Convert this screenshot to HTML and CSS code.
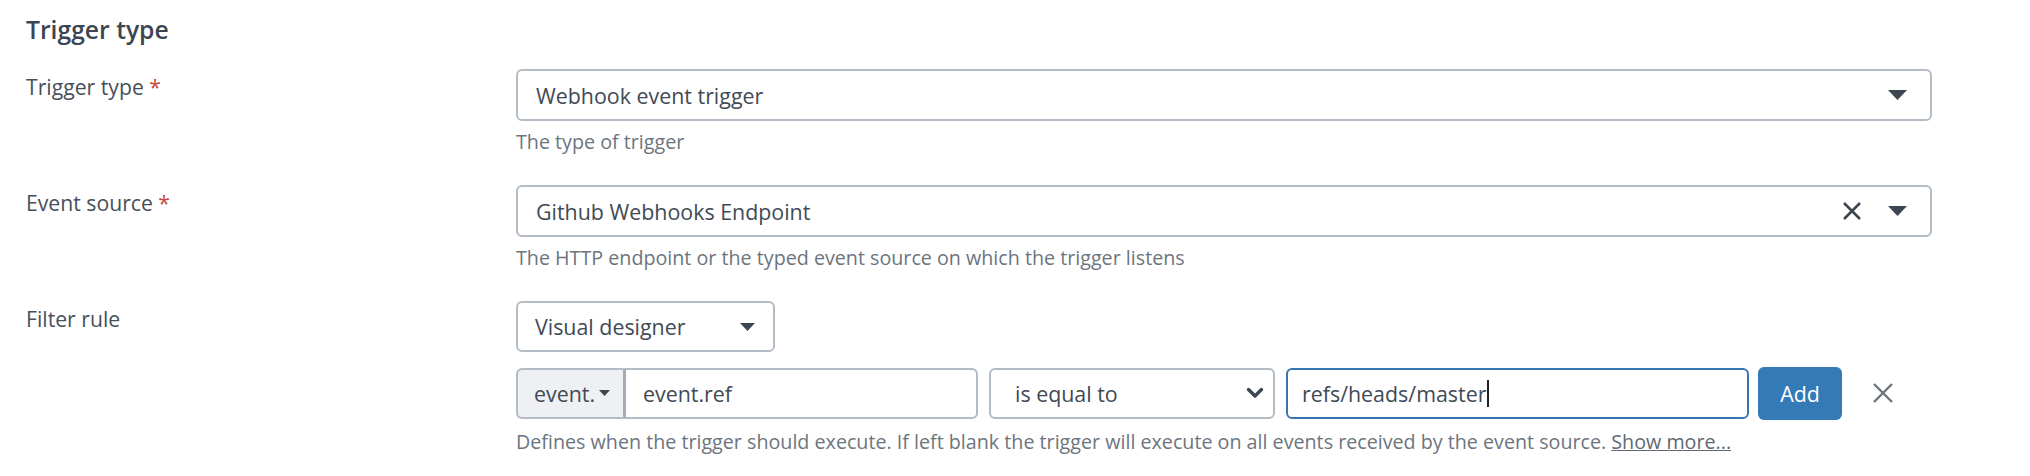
FILE: index.html
```html
<!DOCTYPE html>
<html>
<head>
<meta charset="utf-8">
<link rel="stylesheet" href="styles.css">
</head>
<body>
<div class="page">
  <h2 class="section-title">Trigger type</h2>

  <div class="form-row">
    <div class="row-label">Trigger type <span class="req">*</span></div>
    <div class="row-control">
      <div class="select-box">
        <span class="value">Webhook event trigger</span>
        <span class="icons">
          <svg class="caret" width="19" height="10" viewBox="0 0 19 10"><polygon points="0,0 19,0 9.5,10"/></svg>
        </span>
      </div>
      <div class="help">The type of trigger</div>
    </div>
  </div>

  <div class="form-row">
    <div class="row-label">Event source <span class="req">*</span></div>
    <div class="row-control">
      <div class="select-box">
        <span class="value">Github Webhooks Endpoint</span>
        <span class="icons">
          <svg class="clear" width="20" height="20" viewBox="0 0 20 20"><path d="M2 2 L18 18 M18 2 L2 18"/></svg>
          <svg class="caret" width="19" height="10" viewBox="0 0 19 10"><polygon points="0,0 19,0 9.5,10"/></svg>
        </span>
      </div>
      <div class="help">The HTTP endpoint or the typed event source on which the trigger listens</div>
    </div>
  </div>

  <div class="form-row">
    <div class="row-label">Filter rule</div>
    <div class="row-control">
      <div class="mode-select">
        <span class="value">Visual designer</span>
        <svg class="caret" width="15" height="8" viewBox="0 0 15 8"><polygon points="0,0 15,0 7.5,8"/></svg>
      </div>
      <div class="filter-row">
        <div class="input-group">
          <div class="addon">event.<svg class="caret" width="11" height="6" viewBox="0 0 11 6"><polygon points="0,0 11,0 5.5,6"/></svg></div>
          <div class="text-input grouped">event.ref</div>
        </div>
        <div class="op-select">
          <span>is equal to</span>
          <svg class="chevron" width="18" height="12" viewBox="0 0 18 12"><path d="M2.5 2.5 L9 9 L15.5 2.5"/></svg>
        </div>
        <div class="text-input focused">refs/heads/master<span class="cursor"></span></div>
        <button class="btn-add">Add</button>
        <svg class="remove" width="22" height="22" viewBox="0 0 22 22"><path d="M2 2 L20 20 M20 2 L2 20"/></svg>
      </div>
      <div class="help help-filter">Defines when the trigger should execute. If left blank the trigger will execute on all events received by the event source. <a class="more">Show more...</a></div>
    </div>
  </div>
</div>
</body>
</html>
```

FILE: styles.css
```css
* { box-sizing: border-box; }
html, body { margin: 0; padding: 0; background: #ffffff; }
body {
  font-family: "Open Sans", "Liberation Sans", sans-serif;
  color: #434c57;
}
.page { padding: 14px 0 0 26px; }

.section-title {
  margin: 0;
  font-size: 24.7px;
  line-height: 32px;
  font-weight: 600;
  color: #3c4552;
}

.form-row {
  display: grid;
  grid-template-columns: 490px 1416px;
  margin-top: 23px;
}
.form-row + .form-row { margin-top: 30px; }

.row-label {
  font-size: 21.2px;
  line-height: 34px;
  padding-top: 1px;
  color: #464f5a;
}
.req { color: #c4453a; }

.select-box {
  height: 52px;
  border: 2px solid #b3bcc5;
  border-radius: 6px;
  display: flex;
  align-items: center;
  padding: 0 23px 0 18px;
  font-size: 21.4px;
  color: #414a55;
}
.select-box .value { flex: 1; }
.icons { display: flex; align-items: center; gap: 26px; }
.caret polygon { fill: #3d4550; }
.clear path { stroke: #3d4550; stroke-width: 2.6; fill: none; }

.help {
  margin-top: 8px;
  font-size: 19.7px;
  line-height: 26px;
  color: #6c757e;
}
.help-filter { margin-top: 10px; }
.more { color: #5f6871; text-decoration: underline; }

.mode-select {
  width: 259px;
  height: 51px;
  border: 2px solid #b3bcc5;
  border-radius: 6px;
  display: flex;
  align-items: center;
  justify-content: space-between;
  padding: 0 18px 0 17px;
  font-size: 21.4px;
  color: #414a55;
}

.filter-row {
  display: flex;
  align-items: center;
  margin-top: 15px;
  height: 52px;
}
.input-group {
  display: flex;
  width: 462px;
  height: 51px;
}
.addon {
  width: 110px;
  flex: none;
  background: #eef0f4;
  border: 2px solid #b3bcc5;
  border-right: 3px solid #a3acb5;
  border-radius: 6px 0 0 6px;
  display: flex;
  align-items: center;
  gap: 4px;
  padding-left: 16px;
  font-size: 21.4px;
  color: #414a55;
}
.text-input {
  height: 51px;
  border: 2px solid #b3bcc5;
  border-radius: 6px;
  display: flex;
  align-items: center;
  padding: 0 17px;
  font-size: 21.4px;
  color: #414a55;
}
.text-input.grouped {
  flex: 1;
  border-left: none;
  border-radius: 0 6px 6px 0;
}
.op-select {
  width: 286px;
  height: 51px;
  margin-left: 11px;
  border: 2px solid #b3bcc5;
  border-radius: 6px;
  display: flex;
  align-items: center;
  justify-content: space-between;
  padding: 0 9px 0 24px;
  font-size: 21.4px;
  color: #414a55;
}
.chevron path { stroke: #3d4550; stroke-width: 3.4; fill: none; stroke-linecap: round; stroke-linejoin: round; }
.text-input.focused {
  width: 463px;
  margin-left: 11px;
  border-color: #3677b3;
  padding-left: 14px;
}
.cursor {
  display: inline-block;
  width: 1.5px;
  height: 27px;
  background: #222;
  margin-left: 1px;
}
.btn-add {
  width: 84px;
  height: 53px;
  margin-left: 9px;
  border: none;
  border-radius: 6px;
  background: #337ab7;
  color: #ffffff;
  font-family: "Open Sans", "Liberation Sans", sans-serif;
  font-size: 21.4px;
  padding: 0;
}
.remove { margin-left: 30px; }
.remove path { stroke: #6b747c; stroke-width: 2.4; fill: none; }
```
